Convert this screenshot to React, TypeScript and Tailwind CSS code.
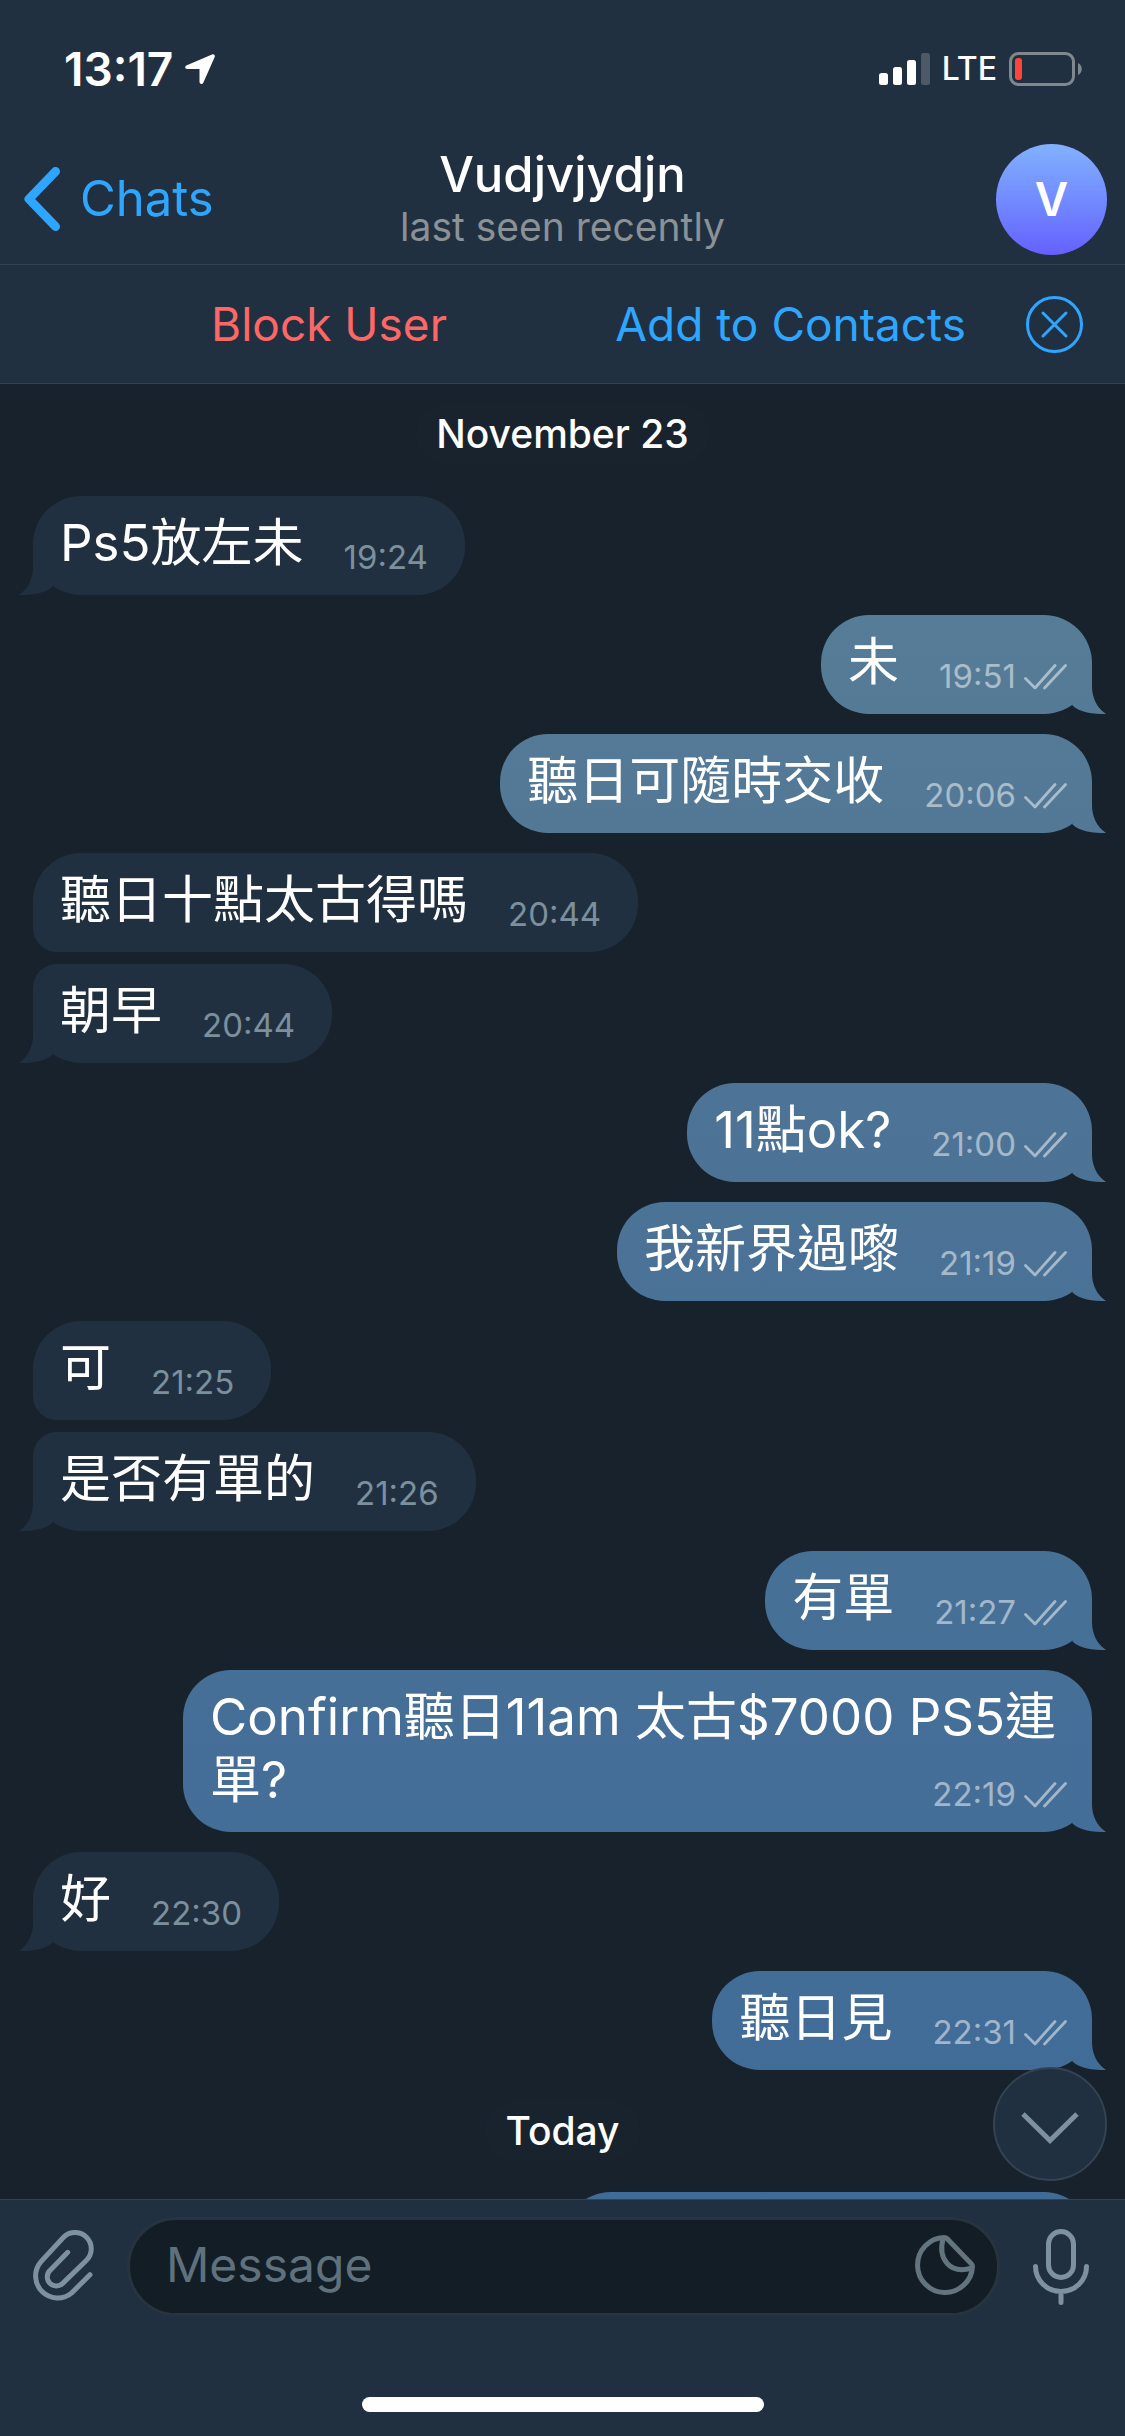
import { useState } from "react"

type Message = {
  id: number
  text: string
  time: string
  out?: boolean
  // position inside a run of messages from the same sender
  group?: "first" | "last"
}

const november: Message[] = [
  { id: 1, text: "Ps5放左未", time: "19:24" },
  { id: 2, text: "未", time: "19:51", out: true },
  { id: 3, text: "聽日可隨時交收", time: "20:06", out: true },
  { id: 4, text: "聽日十點太古得嗎", time: "20:44", group: "first" },
  { id: 5, text: "朝早", time: "20:44", group: "last" },
  { id: 6, text: "11點ok?", time: "21:00", out: true },
  { id: 7, text: "我新界過嚟", time: "21:19", out: true },
  { id: 8, text: "可", time: "21:25", group: "first" },
  { id: 9, text: "是否有單的", time: "21:26", group: "last" },
  { id: 10, text: "有單", time: "21:27", out: true },
  { id: 11, text: "Confirm聽日11am 太古$7000 PS5連單?", time: "22:19", out: true },
  { id: 12, text: "好", time: "22:30" },
  { id: 13, text: "聽日見", time: "22:31", out: true },
]

// one gradient shared by every outgoing bubble, pinned to the window
const outgoing =
  "bg-fixed bg-[linear-gradient(180deg,#597e96_20%,#4d7496_45%,#456f97_70%,#3f6b97_92%)]"

function StatusBar() {
  return (
    <div className="flex h-[138px] items-center justify-between pl-16 pr-[43px] text-white">
      <div className="flex items-center gap-3">
        <span className="text-[46px] leading-[54px] font-semibold">13:17</span>
        <svg className="h-[30px] w-[30px]" viewBox="0 0 30 30" fill="currentColor">
          <path d="M27 .4 1.3 11.6C-.5 12.5 0 15 2 15h12.5v12.7c0 2.5 2.8 3 3.8 1L29.7 3C30.4 1.3 28.8-.4 27 .4Z" />
        </svg>
      </div>
      <div className="flex items-center gap-3">
        <svg className="h-8 w-[51px]" viewBox="0 0 51 32" fill="currentColor">
          <rect x="0" y="20" width="9" height="12" rx="2.5" />
          <rect x="14" y="14" width="9" height="18" rx="2.5" />
          <rect x="28" y="7" width="9" height="25" rx="2.5" />
          <rect x="42" y="0" width="9" height="32" rx="2.5" opacity="0.2" />
        </svg>
        <span className="text-[32px] leading-10 font-medium">LTE</span>
        <svg className="h-[34px] w-[73px]" viewBox="0 0 73 34">
          <rect x="1.5" y="1.5" width="63" height="31" rx="8" fill="none" stroke="#7f878f" strokeWidth="3" />
          <rect x="6" y="6" width="7" height="22" rx="3" fill="#ff453a" />
          <path d="M69 11c5 2 5 10 0 12Z" fill="#7f878f" />
        </svg>
      </div>
    </div>
  )
}

function Header() {
  return (
    <header className="border-b border-[#344352] bg-[#213040]">
      <StatusBar />
      <div className="grid h-[126px] grid-cols-[1fr_auto_1fr] items-center px-[18px] pb-1">
        <button className="flex items-center gap-5 justify-self-start pl-[6px] text-[#2ea6ff]">
          <svg className="h-16 w-9" viewBox="0 0 36 64" fill="none" stroke="currentColor" strokeWidth="9" strokeLinecap="round" strokeLinejoin="round">
            <path d="M31.5 4.5 5 32l26.5 27.5" />
          </svg>
          <span className="text-[49px] leading-[60px]">Chats</span>
        </button>
        <div className="flex flex-col items-center pb-[2px]">
          <h1 className="text-[49px] leading-[57px] font-medium text-white">Vudjvjydjn</h1>
          <p className="text-[39px] leading-[48px] text-[#8a9197]">last seen recently</p>
        </div>
        <button
          aria-label="Open profile"
          className="flex h-[111px] w-[111px] items-center justify-center justify-self-end rounded-full bg-linear-to-b from-[#82b1ff] to-[#665fff] text-[46px] font-semibold text-white"
        >
          V
        </button>
      </div>
    </header>
  )
}

function ContactBar({ onClose }: { onClose: () => void }) {
  return (
    <div className="flex h-[119px] items-center border-b border-[#344352] bg-[#213040] pr-[42px] text-[46px] leading-[60px]">
      <div className="grid flex-1 grid-cols-2">
        <button className="justify-self-end pr-[66px] text-[#ff6767]">Block User</button>
        <button className="justify-self-end pr-[60px] text-[#2ea6ff]">Add to Contacts</button>
      </div>
      <button aria-label="Close" className="text-[#2ea6ff]" onClick={onClose}>
        <svg className="h-[57px] w-[57px]" viewBox="0 0 57 57" fill="none" stroke="currentColor" strokeWidth="3" strokeLinecap="round">
          <circle cx="28.5" cy="28.5" r="27" />
          <path d="m17 17 23 23m0-23-23 23" />
        </svg>
      </button>
    </div>
  )
}

function DateLabel({ children }: { children: string }) {
  return (
    <div className="flex justify-center">
      <span className="rounded-full bg-[#19232d] px-5 text-[39px] leading-[60px] font-medium text-white">
        {children}
      </span>
    </div>
  )
}

function Checks() {
  return (
    <svg className="h-[26px] w-[43px]" viewBox="0 0 43 26" fill="none" stroke="currentColor" strokeWidth="2.8" strokeLinecap="round" strokeLinejoin="round">
      <path d="M1.5 14.5 11 24 31 1.5M20.5 24l21-22.5" />
    </svg>
  )
}

// the time floats to the end of the last line, or wraps below it
function Bubble({ message }: { message: Message }) {
  const { text, time, out, group } = message

  if (out) {
    return (
      <div className="flex justify-end pl-[150px]">
        <div className={"relative flow-root rounded-[48px] pt-[15px] pr-[25px] pb-[18px] pl-[27px] text-[51px] leading-[63px] text-white " + outgoing}>
          {text}
          <div className="float-right mt-[27px] ml-[40px] flex items-center gap-2 text-white/50">
            <time className="text-[33px] leading-[39px]">{time}</time>
            <Checks />
          </div>
          <span
            className={
              "absolute -right-[14px] bottom-0 h-[50px] w-[48px] [clip-path:path('M28_0H34V22C34_34_39_44_48_50C35_50_22_49_14_41L28_20Z')] " +
              outgoing
            }
          />
        </div>
      </div>
    )
  }

  const corners =
    group === "first" ? "rounded-bl-[24px]" : group === "last" ? "rounded-tl-[24px]" : ""

  return (
    <div className="flex pr-[150px]">
      <div className={"relative flow-root rounded-[48px] bg-[#213040] pt-[15px] pr-[37px] pb-[18px] pl-[27px] text-[51px] leading-[63px] text-white " + corners}>
        {text}
        <time className="float-right mt-[27px] ml-[40px] text-[33px] leading-[39px] text-[#7b8f9d]">{time}</time>
        {group !== "first" && (
          <span className="absolute bottom-0 -left-[14px] h-[50px] w-[48px] bg-[#213040] [clip-path:path('M20_0H14V22C14_34_9_44_0_50C13_50_26_49_34_41L20_20Z')]" />
        )}
      </div>
    </div>
  )
}

function Composer() {
  return (
    <footer className="border-t border-[#344352] bg-[#213040]">
      <div className="flex items-center pt-[17px] pr-[36px] pl-[31px] text-[#7d919e]">
        <button aria-label="Attach file">
          <svg className="h-[74px] w-[66px]" viewBox="0 0 66 74" fill="none" stroke="currentColor" strokeWidth="5" strokeLinecap="round">
            <path d="M36.7 22.3 19 40.4A9 9 0 0 0 31.7 53.4L55.5 30.2A16.2 16.2 0 0 0 32.5 7.2L9.8 31.8A22 22 0 0 0 40.8 62.8L59 44.7" />
          </svg>
        </button>
        <div className="mr-[33px] ml-[30px] flex h-[99px] min-w-0 flex-1 items-center rounded-full border-3 border-[#27333f] bg-[#131d26] pr-[22px] pl-[36px]">
          <input
            type="text"
            aria-label="Message"
            placeholder="Message"
            className="min-w-0 flex-1 bg-transparent pb-1 text-[48px] leading-[60px] text-white outline-none placeholder:text-[#5f717d]"
          />
          <button aria-label="Stickers" className="pb-1 text-[#63747f]">
            <svg className="h-[60px] w-[60px]" viewBox="0 0 60 60" fill="none" stroke="currentColor" strokeWidth="5" strokeLinejoin="round">
              <path d="M29 2.5a27.5 27.5 0 1 0 28.5 29c0-1-.5-2-1-2.5L32 3.5c-1-1-2-1-3-1Z" />
              <path d="M28 4c-5 19 6 36 29 29" />
            </svg>
          </button>
        </div>
        <button aria-label="Record voice message">
          <svg className="h-[76px] w-[56px]" viewBox="0 0 56 76" fill="none" stroke="currentColor" strokeWidth="5" strokeLinecap="round">
            <rect x="15.5" y="2.5" width="25" height="46" rx="12.5" />
            <path d="M2.5 37.5a25.5 25 0 0 0 51 0M28 63v10.5" />
          </svg>
        </button>
      </div>
      <div className="flex justify-center pt-[81px] pb-6">
        <div className="h-[15px] w-[402px] rounded-full bg-white" />
      </div>
    </footer>
  )
}

export default function App() {
  const [showBar, setShowBar] = useState(true)

  return (
    <div className="flex h-screen flex-col bg-[#18222c] font-['Inter','Noto_Sans_CJK_TC',sans-serif]">
      <Header />
      {showBar && <ContactBar onClose={() => setShowBar(false)} />}
      <main className="relative min-h-0 flex-1 overflow-hidden pt-[20px] pr-[33px] pl-[33px]">
        <DateLabel>November 23</DateLabel>
        <div className="flex flex-col pt-8 pb-[31px]">
          {november.map((message) => (
            <div key={message.id} className={message.id === 1 ? "" : message.group === "last" ? "pt-3" : "pt-5"}>
              <Bubble message={message} />
            </div>
          ))}
        </div>
        <DateLabel>Today</DateLabel>
        <div className="flex justify-end pt-[31px]">
          <div className={"h-[99px] w-1/2 rounded-[48px] " + outgoing} />
        </div>
        <button
          aria-label="Scroll to bottom"
          className="absolute right-[18px] bottom-[18px] flex h-[114px] w-[114px] items-center justify-center rounded-full border-2 border-[#344352] bg-[#213040] pt-2 text-[#7d919e]"
        >
          <svg className="h-8 w-[58px]" viewBox="0 0 58 32" fill="none" stroke="currentColor" strokeWidth="5">
            <path d="m2 2 27 26.5L56 2" />
          </svg>
        </button>
      </main>
      <Composer />
    </div>
  )
}
